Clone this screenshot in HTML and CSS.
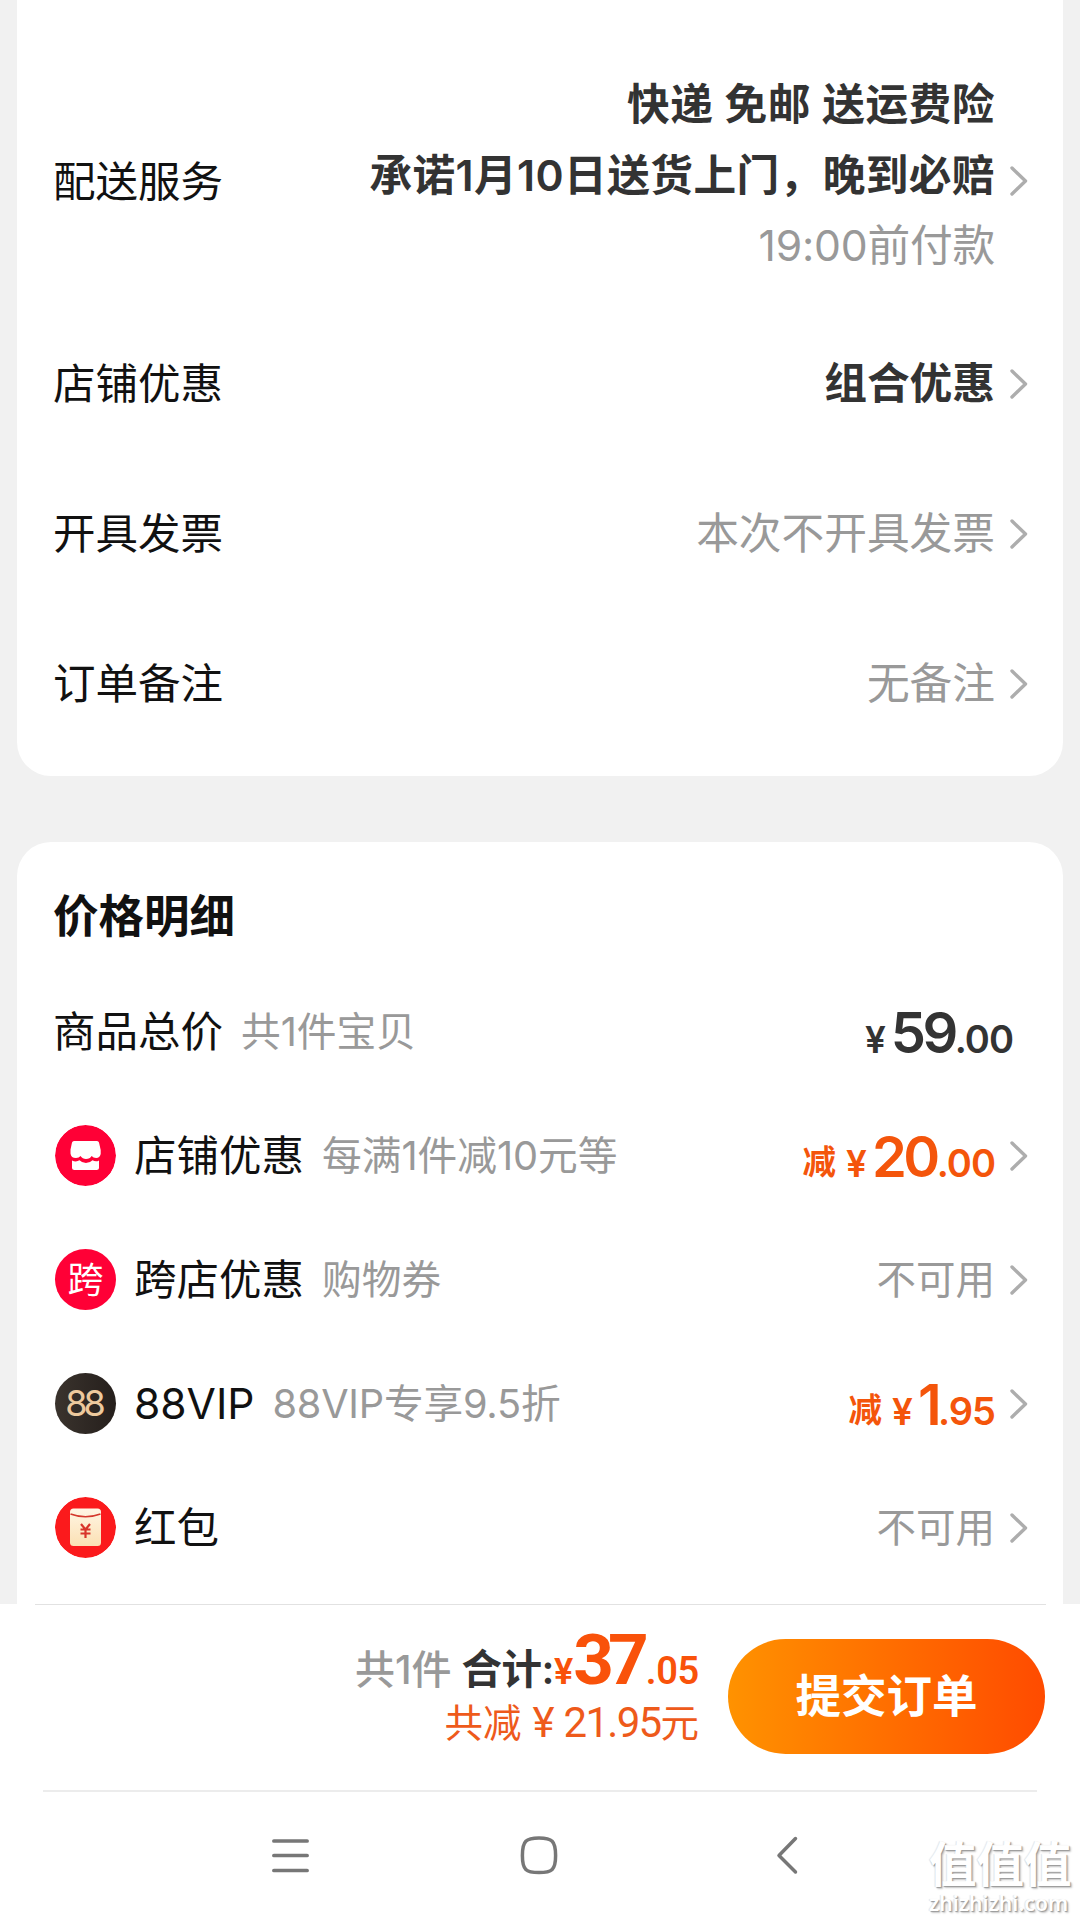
FILE: index.html
```html
<!DOCTYPE html>
<html lang="zh-CN">
<head>
<meta charset="utf-8">
<title>确认订单</title>
<link rel="stylesheet" href="styles.css">
</head>
<body>
<svg width="0" height="0" class="defs">
  <symbol id="chevron" viewBox="0 0 18 30"><path d="M2 2 15.5 15 2 28" fill="none" stroke="#adadad" stroke-width="3.4" stroke-linecap="round" stroke-linejoin="round"/></symbol>
</svg>
<main class="page">
  <section class="card options">
    <div class="row delivery">
      <span class="label">配送服务</span>
      <div class="value lines">
        <span class="strong ship">快递 免邮 送运费险</span>
        <span class="strong promise">承诺1月10日送货上门，晚到必赔</span>
        <span class="muted paytime">19:00前付款</span>
      </div>
      <svg class="chev"><use href="#chevron"/></svg>
    </div>
    <div class="row"><span class="label">店铺优惠</span><span class="value strong">组合优惠</span><svg class="chev"><use href="#chevron"/></svg></div>
    <div class="row"><span class="label">开具发票</span><span class="value muted">本次不开具发票</span><svg class="chev"><use href="#chevron"/></svg></div>
    <div class="row"><span class="label">订单备注</span><span class="value muted">无备注</span><svg class="chev"><use href="#chevron"/></svg></div>
  </section>

  <section class="card prices">
    <h2 class="title">价格明细</h2>
    <div class="item total">
      <span class="label">商品总价</span><span class="note">共1件宝贝</span>
      <span class="price dark"><span class="yen">¥</span><span class="int">59</span><span class="dec">.00</span></span>
    </div>
    <div class="item">
      <svg class="badge" viewBox="0 0 61 61"><circle cx="30.5" cy="30.5" r="30.5" fill="#ff0036"/><path d="M19 16h23q1.500 0 2 1.500l1.700 7.500v4q-1 4-4.500 4-3 0-4.500-2-1.800 3-5.700 3-3.500 0-5.500-3-1.500 2-4.500 2-5 0-5.500-4.500v-4l1.500-7q.5-1.500 2-1.500z" fill="#fff"/><path d="M17 35.500q4 2 7.500-.2 2.500 2.700 6.500 2.700 4 0 6.500-2.700 3.500 2 6.500.2v7q0 2.500-2.500 2.500h-22q-2.500 0-2.500-2.500z" fill="#fff"/></svg>
      <span class="label">店铺优惠</span><span class="note">每满1件减10元等</span>
      <span class="price"><span class="cut">减</span><span class="yen">¥</span><span class="int">20</span><span class="dec">.00</span></span>
      <svg class="chev"><use href="#chevron"/></svg>
    </div>
    <div class="item">
      <span class="badge cross">跨</span>
      <span class="label">跨店优惠</span><span class="note">购物券</span>
      <span class="value none">不可用</span>
      <svg class="chev"><use href="#chevron"/></svg>
    </div>
    <div class="item">
      <span class="badge vip">88</span>
      <span class="label">88VIP</span><span class="note vipnote">88VIP专享9.5折</span>
      <span class="price"><span class="cut">减</span><span class="yen">¥</span><span class="int">1</span><span class="dec">.95</span></span>
      <svg class="chev"><use href="#chevron"/></svg>
    </div>
    <div class="item">
      <svg class="badge" viewBox="0 0 61 61"><defs><linearGradient id="env" x2="0" y2="1"><stop stop-color="#fff6e4"/><stop offset="1" stop-color="#fbe0b4"/></linearGradient></defs><circle cx="30.500" cy="30.500" r="30.500" fill="#fb1a1c"/><rect x="15" y="11.500" width="31" height="37.500" rx="3.500" fill="url(#env)"/><path d="M15.500 17q15 5.500 30 0" fill="none" stroke="#d4392d" stroke-width="1.700"/><path d="m26 27 4.500 5.500L35 27M25.500 32.500h10M25.500 36.500h10M30.500 32.500v8.500" fill="none" stroke="#d8342b" stroke-width="2.200"/></svg>
      <span class="label">红包</span>
      <span class="value none">不可用</span>
      <svg class="chev"><use href="#chevron"/></svg>
    </div>
  </section>
</main>

<footer class="footer">
  <div class="checkout">
    <div class="summary">
      <div class="sum"><span class="count">共1件</span><span class="heji">合计:</span><span class="fyen">¥</span><span class="fint">37</span><span class="fdec">.05</span></div>
      <div class="saved"><span>共减</span><span class="syen">¥</span><span class="snum">21.95</span><span>元</span></div>
    </div>
    <button class="submit">提交订单</button>
  </div>
  <nav class="nav">
    <svg viewBox="0 0 40 40"><path d="M3.900 6h33.200M3.900 20.500h33.200M3.900 35.500h33.200" stroke-width="3.700"/></svg>
    <svg viewBox="0 0 40 40"><path d="M20 3c13 0 16.600 3 16.600 17.500S33 37.500 20 37.500 3.400 35 3.400 20.500 7 3 20 3z" stroke-width="3.500"/></svg>
    <svg viewBox="0 0 40 40"><path d="M27.500 3.500 11 20.500 27.500 37" stroke-width="3.500"/></svg>
  </nav>
</footer>
<div class="watermark"><span class="wm-name">值值值</span><span class="wm-url">zhizhizhi.com</span></div>
</body>
</html>
```
FILE: styles.css
```css
* { box-sizing: border-box; }
body {
  margin: 0;
  width: 1080px;
  height: 1920px;
  overflow: hidden;
  display: flex;
  flex-direction: column;
  background: #f1f1f1;
  color: #111;
  font-family: Inter, "Noto Sans CJK SC", sans-serif;
  font-size: 43px;
  line-height: 60px;
  white-space: nowrap;
}
.defs { position: absolute; }
.page {
  height: 1604px;
  padding: 0 17px;
  display: flex;
  flex-direction: column;
  gap: 66px;
  overflow: hidden;
}
.card { background: #fff; border-radius: 34px; padding: 0 35px 0 36px; flex: none; }
.options { height: 776px; border-radius: 0 0 34px 34px; }
.row, .item { display: flex; align-items: center; }
.row { height: 150px; }
.label { font-size: 42.500px; padding-top: 2px; }
.delivery { height: 308px; padding-top: 53px; }
.value, .price { margin-left: auto; }
.value { padding-top: 2px; }
.lines {
  display: flex;
  flex-direction: column;
  align-items: flex-end;
  line-height: 70.5px;
  margin-top: -11px;
}
.strong { color: #333; font-weight: 600; font-size: 42.700px; }
.ship { letter-spacing: .5px; }
.promise { letter-spacing: .4px; }
.muted, .none { color: #999; }
.muted { font-size: 42.700px; }
.paytime { letter-spacing: -.2px; }
.none { font-size: 39.500px; }
.chev { width: 18px; height: 30px; margin: 1px 0 0 15px; flex: none; }

.prices { height: 900px; padding-top: 44px; }
.title { margin: 0; font-size: 45.500px; font-weight: 600; line-height: 62px; }
.item { height: 124px; }
.total { margin-top: 21px; }
.note { color: #999; font-size: 39.700px; margin-left: 18px; padding-top: 2px; }
.vipnote { letter-spacing: -.2px; }
.badge { width: 61px; height: 61px; border-radius: 50%; margin: 0 18px 0 2px; flex: none; }
.cross { background: #ff0036; color: #fff; font-size: 36px; line-height: 62px; text-align: center; }
.vip {
  background: linear-gradient(90deg, #3a332d, #251f1c);
  color: #edc99d;
  font-size: 36px;
  letter-spacing: -4px;
  text-indent: -4px;
  line-height: 60px;
  text-align: center;
}
.price { color: #f4550b; font-weight: 600; padding-top: 10px; }
.dark { color: #333; margin-right: 15px; }
.cut { font-size: 33.500px; margin-right: 10px; vertical-align: 3px; }
.yen { font-size: 37px; margin-right: 5px; }
.int { font-size: 56px; letter-spacing: -3.500px; }
.dec { font-size: 38px; letter-spacing: -1px; }

.footer { height: 316px; background: #fff; display: flex; flex-direction: column; }
.checkout {
  height: 188px;
  margin: 0 43px;
  border-bottom: 2px solid #ececec;
  display: flex;
  justify-content: flex-end;
  gap: 29px;
  position: relative;
  padding: 35px 0 0;
}
.checkout::before {
  content: "";
  position: absolute;
  top: 0;
  left: -8px;
  right: -9px;
  border-top: 1px solid #e2e2e2;
}
.summary { display: flex; flex-direction: column; align-items: flex-end; margin-top: -6px; }
.sum { display: flex; align-items: baseline; height: 60px; line-height: 54px; font-weight: 600; }
.count { color: #999; font-size: 40px; font-weight: 500; margin-right: 10px; }
.heji { color: #333; font-size: 40.500px; letter-spacing: -.5px; }
.fyen, .fint, .fdec { font-family: Roboto, sans-serif; color: #f9520a; }
.fyen { font-size: 36px; }
.fint { font-size: 71px; font-weight: 700; letter-spacing: -6px; margin-right: 3px; }
.fdec { font-size: 38px; letter-spacing: -.3px; }
.saved { display: flex; align-items: baseline; color: #ee5a1b; font-size: 38.500px; line-height: 59px; }
.syen, .snum { font-family: Roboto, sans-serif; font-size: 42px; }
.syen { margin: 0 9px 0 11px; }
.snum { letter-spacing: -1.700px; }
.submit {
  width: 317px;
  height: 115px;
  margin-right: -8px;
  border: 0;
  padding: 0;
  border-radius: 58px;
  background: linear-gradient(90deg, #ff9200, #ff4b00);
  color: #fff;
  font: 600 45.500px/115px Inter, "Noto Sans CJK SC", sans-serif;
}
.nav { display: flex; gap: 209px; padding: 43px 0 0 270px; }
.nav svg { width: 40px; height: 40px; fill: none; stroke: #777; stroke-linecap: round; stroke-linejoin: round; }

.watermark {
  position: absolute;
  left: 929px;
  top: 1837px;
  display: flex;
  flex-direction: column;
  color: #fff;
  font-weight: 700;
  text-shadow: 1px 1px 1px #999, 2px 2px 2px #ccc, -1px 0 1px #e4e4e4;
}
.wm-name { font-size: 47.500px; line-height: 56px; }
.wm-url { font: 600 21px/20px "Noto Sans", sans-serif; letter-spacing: .1px; }
```
